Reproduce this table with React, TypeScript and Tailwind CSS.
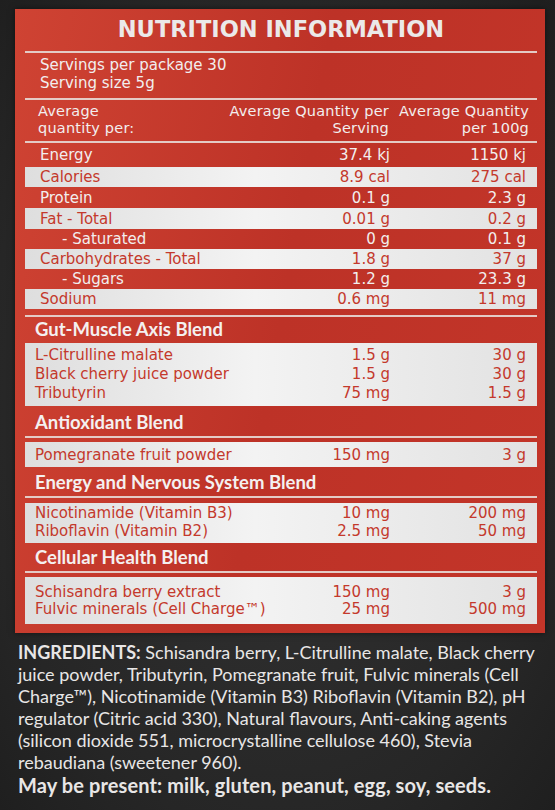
import React from "react";

type RowProps = {
  label: string;
  serving: string;
  per100: string;
  tone: "red" | "white";
  className?: string;
  indent?: boolean;
};

const body = "font-['DejaVu_Sans',sans-serif] text-[15px]";
const cols = "grid grid-cols-[1fr_110px_136px] items-center whitespace-nowrap";

const Row = ({ label, serving, per100, tone, className = "", indent }: RowProps) => (
  <div
    className={`${cols} pr-[11px] pl-[15px] leading-[20px] ${body} ${
      tone === "white"
        ? "bg-[linear-gradient(90deg,#dedede,#f3f3f3_45%,#e2e2e2)] text-[#c4392c]"
        : "text-[#f2eeee]"
    } ${className}`}
  >
    <span className={indent ? "pl-[22px]" : ""}>{label}</span>
    <span className="text-right">{serving}</span>
    <span className="text-right">{per100}</span>
  </div>
);

const Line = ({ className = "" }: { className?: string }) => (
  <div className={`h-[2px] bg-[#e4cbc6] ${className}`}></div>
);

const Heading = ({ children, className = "" }: { children: React.ReactNode; className?: string }) => (
  <div
    className={`flex items-center pl-[10px] font-['Lato',sans-serif] text-[18.5px] font-bold text-[#f4f0f0] ${className}`}
  >
    {children}
  </div>
);

const BlendItem = ({ label, serving, per100, className = "" }: Omit<RowProps, "tone">) => (
  <div className={`${cols} pr-[11px] pl-[10px] ${body} text-[#c4392c] ${className}`}>
    <span>{label}</span>
    <span className="text-right">{serving}</span>
    <span className="text-right">{per100}</span>
  </div>
);

const whiteBox = "bg-[linear-gradient(90deg,#dedede,#f3f3f3_45%,#e2e2e2)]";

export default function App() {
  return (
    <div className="w-[555px] h-[810px] overflow-hidden bg-[radial-gradient(ellipse_at_center,#343434,#262626_75%,#1f1f1f)] pt-[9px] pl-[15px] pr-[10px]">
      {/* red label */}
      <div className="bg-[linear-gradient(100deg,#cf4333,#bd3227_50%,#c33529)] pl-[10px] pr-[8px] pb-[9px] shadow-[0_0_6px_rgba(0,0,0,0.5)]">
        <div className="h-[42px] flex items-center justify-center pb-[1px] font-['DejaVu_Sans',sans-serif] text-[22.5px] font-bold text-[#ebe9e9]">
          NUTRITION INFORMATION
        </div>
        <Line />
        <div className={`pl-[15px] pt-[3px] pb-[6px] leading-[18px] text-[#f2eeee] ${body}`}>
          <div>Servings per package 30</div>
          <div>Serving size 5g</div>
        </div>
        <Line />
        <div className="grid grid-cols-[1fr_175px_140px] pl-[13px] pr-[8px] pt-[3px] pb-[4px] leading-[17px] text-[#f2eeee] font-['DejaVu_Sans',sans-serif] text-[14.5px] tracking-[0.2px]">
          <span>
            Average
            <br />
            quantity per:
          </span>
          <span className="text-right whitespace-nowrap">
            Average Quantity per
            <br />
            Serving
          </span>
          <span className="text-right whitespace-nowrap">
            Average Quantity
            <br />
            per 100g
          </span>
        </div>
        <Line />
        <Row label="Energy" serving="37.4 kj" per100="1150 kj" tone="red" className="h-[24px]" />
        <Row label="Calories" serving="8.9 cal" per100="275 cal" tone="white" className="h-[20px]" />
        <Row label="Protein" serving="0.1 g" per100="2.3 g" tone="red" className="h-[21px]" />
        <Row label="Fat - Total" serving="0.01 g" per100="0.2 g" tone="white" className="h-[21px]" />
        <Row label="- Saturated" serving="0 g" per100="0.1 g" tone="red" indent className="h-[20px]" />
        <Row label="Carbohydrates - Total" serving="1.8 g" per100="37 g" tone="white" className="h-[20px]" />
        <Row label="- Sugars" serving="1.2 g" per100="23.3 g" tone="red" indent className="h-[20px]" />
        <Row label="Sodium" serving="0.6 mg" per100="11 mg" tone="white" className="h-[20px]" />

        <Line className="mt-[6px]" />
        <Heading className="h-[26px]">Gut-Muscle Axis Blend</Heading>
        <div className={`${whiteBox} pt-[3px] pb-[3px] leading-[19px]`}>
          <BlendItem label="L-Citrulline malate" serving="1.5 g" per100="30 g" />
          <BlendItem label="Black cherry juice powder" serving="1.5 g" per100="30 g" />
          <BlendItem label="Tributyrin" serving="75 mg" per100="1.5 g" />
        </div>

        <Heading className="h-[30px] pt-[4px]">Antioxidant Blend</Heading>
        <Line />
        <div className={`${whiteBox} mt-[4px] pt-[1px] leading-[24px]`}>
          <BlendItem label="Pomegranate fruit powder" serving="150 mg" per100="3 g" />
        </div>

        <Heading className="h-[29px] pt-[2px]">Energy and Nervous System Blend</Heading>
        <Line />
        <div className={`${whiteBox} mt-[5px] pt-[1px] pb-[3px] leading-[18px]`}>
          <BlendItem label="Nicotinamide (Vitamin B3)" serving="10 mg" per100="200 mg" />
          <BlendItem label="Riboflavin (Vitamin B2)" serving="2.5 mg" per100="50 mg" />
        </div>

        <Heading className="h-[28px] pt-[2px]">Cellular Health Blend</Heading>
        <Line />
        <div className={`${whiteBox} mt-[4px] pt-[7px] pb-[6px] leading-[17px]`}>
          <BlendItem label="Schisandra berry extract" serving="150 mg" per100="3 g" />
          <BlendItem label="Fulvic minerals (Cell Charge™)" serving="25 mg" per100="500 mg" />
        </div>
      </div>

      {/* ingredients */}
      <div className="mt-[8px] pl-[3px] font-['Lato',sans-serif] text-[#e8e6e6]">
        <p className="text-[18px] leading-[22px] whitespace-nowrap">
          <span className="font-bold">INGREDIENTS:</span> Schisandra berry, L-Citrulline malate, Black cherry
          <br />
          juice powder, Tributyrin, Pomegranate fruit, Fulvic minerals (Cell
          <br />
          Charge™), Nicotinamide (Vitamin B3) Riboflavin (Vitamin B2), pH
          <br />
          regulator (Citric acid 330), Natural flavours, Anti-caking agents
          <br />
          (silicon dioxide 551, microcrystalline cellulose 460), Stevia
          <br />
          rebaudiana (sweetener 960).
        </p>
        <p className="text-[20px] leading-[24px] font-bold tracking-[0.1px] whitespace-nowrap">
          May be present: milk, gluten, peanut, egg, soy, seeds.
        </p>
      </div>
    </div>
  );
}
